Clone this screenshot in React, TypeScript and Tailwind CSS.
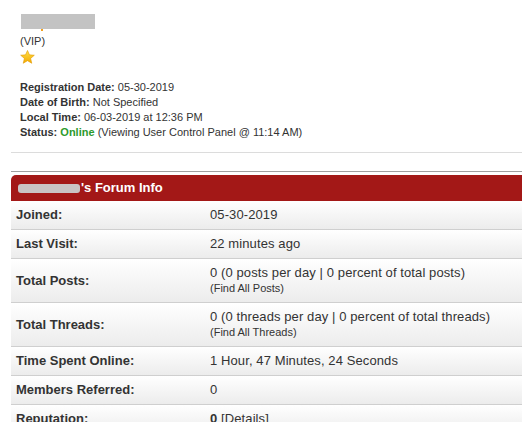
import React from "react";

const rows: { label: string; value: React.ReactNode; sub?: string }[] = [
  { label: "Joined:", value: "05-30-2019" },
  { label: "Last Visit:", value: "22 minutes ago" },
  {
    label: "Total Posts:",
    value: "0 (0 posts per day | 0 percent of total posts)",
    sub: "(Find All Posts)",
  },
  {
    label: "Total Threads:",
    value: "0 (0 threads per day | 0 percent of total threads)",
    sub: "(Find All Threads)",
  },
  { label: "Time Spent Online:", value: "1 Hour, 47 Minutes, 24 Seconds" },
  { label: "Members Referred:", value: "0" },
  {
    label: "Reputation:",
    value: (
      <>
        <b>0</b> [Details]
      </>
    ),
  },
];

function Star() {
  return (
    <svg width="15" height="14" viewBox="0 0 24 23">
      <defs>
        <linearGradient id="sg" x1="0" y1="0" x2="0" y2="1">
          <stop offset="0" stopColor="#ffe14a" />
          <stop offset="1" stopColor="#f2a900" />
        </linearGradient>
      </defs>
      <polygon
        points="12,0.8 15.2,8 23.2,8.6 17.1,13.8 19,21.8 12,17.5 5,21.8 6.9,13.8 0.8,8.6 8.8,8"
        fill="url(#sg)"
        stroke="#e39a00"
        strokeWidth="1"
        strokeLinejoin="round"
      />
    </svg>
  );
}

export default function App() {
  return (
    <div className="h-[436px] w-[525px] bg-white">
      <div
        className="h-[422px] w-[525px] overflow-hidden bg-white text-[#333]"
        style={{ fontFamily: '"Liberation Sans", Arial, sans-serif' }}
      >
        <div className="pl-[20px] pt-[14px]">
          <div className="relative ml-[1px] h-[15px] w-[74px] bg-[#c3c3c3]">
            <div className="absolute left-[20px] top-[15px] h-[2px] w-[2px] bg-[#f0a020]" />
          </div>
          <div className="mt-[5px] text-[11px] leading-[15px]">(VIP)</div>
          <div className="mt-[1px] h-[14px]">
            <Star />
          </div>
          <div className="mt-[16px] text-[11px] leading-[15px]">
            <div>
              <b>Registration Date:</b> 05-30-2019
            </div>
            <div>
              <b>Date of Birth:</b> Not Specified
            </div>
            <div>
              <b>Local Time:</b> 06-03-2019 at 12:36 PM
            </div>
            <div>
              <b>Status:</b> <b className="text-[#2d9a2d]">Online</b> (Viewing User Control Panel @ 11:14 AM)
            </div>
          </div>
        </div>
        <div className="ml-[11px] mr-[3px] mt-[12px] h-px bg-[#dcdcdc]" />
        <div className="ml-[11px] mr-[3px] mt-[18px] h-px bg-[#a0a0a0]" />
        <div className="ml-[11px] mr-[3px] mt-[3px]">
          <div className="flex h-[26px] items-center rounded-tl-[5px] bg-[#a31817] pl-[7px] text-[13px] font-bold text-white">
            <span className="mr-[1px] inline-block h-[9px] w-[62px] rounded-[3px] bg-[#c9c4c4]" />
            <span>'s Forum Info</span>
          </div>
          {rows.map((r, i) => (
            <div
              key={i}
              className="flex items-center border-b border-[#cfcfcf] bg-gradient-to-b from-white to-[#ececec] py-[6px] text-[13px]"
            >
              <div className="w-[199px] shrink-0 pl-[5px] font-bold leading-[16px]">{r.label}</div>
              <div>
                <div className="leading-[16px] tracking-[0.1px]">{r.value}</div>
                {r.sub && <div className="text-[11px] leading-[15px]">{r.sub}</div>}
              </div>
            </div>
          ))}
        </div>
      </div>
    </div>
  );
}
